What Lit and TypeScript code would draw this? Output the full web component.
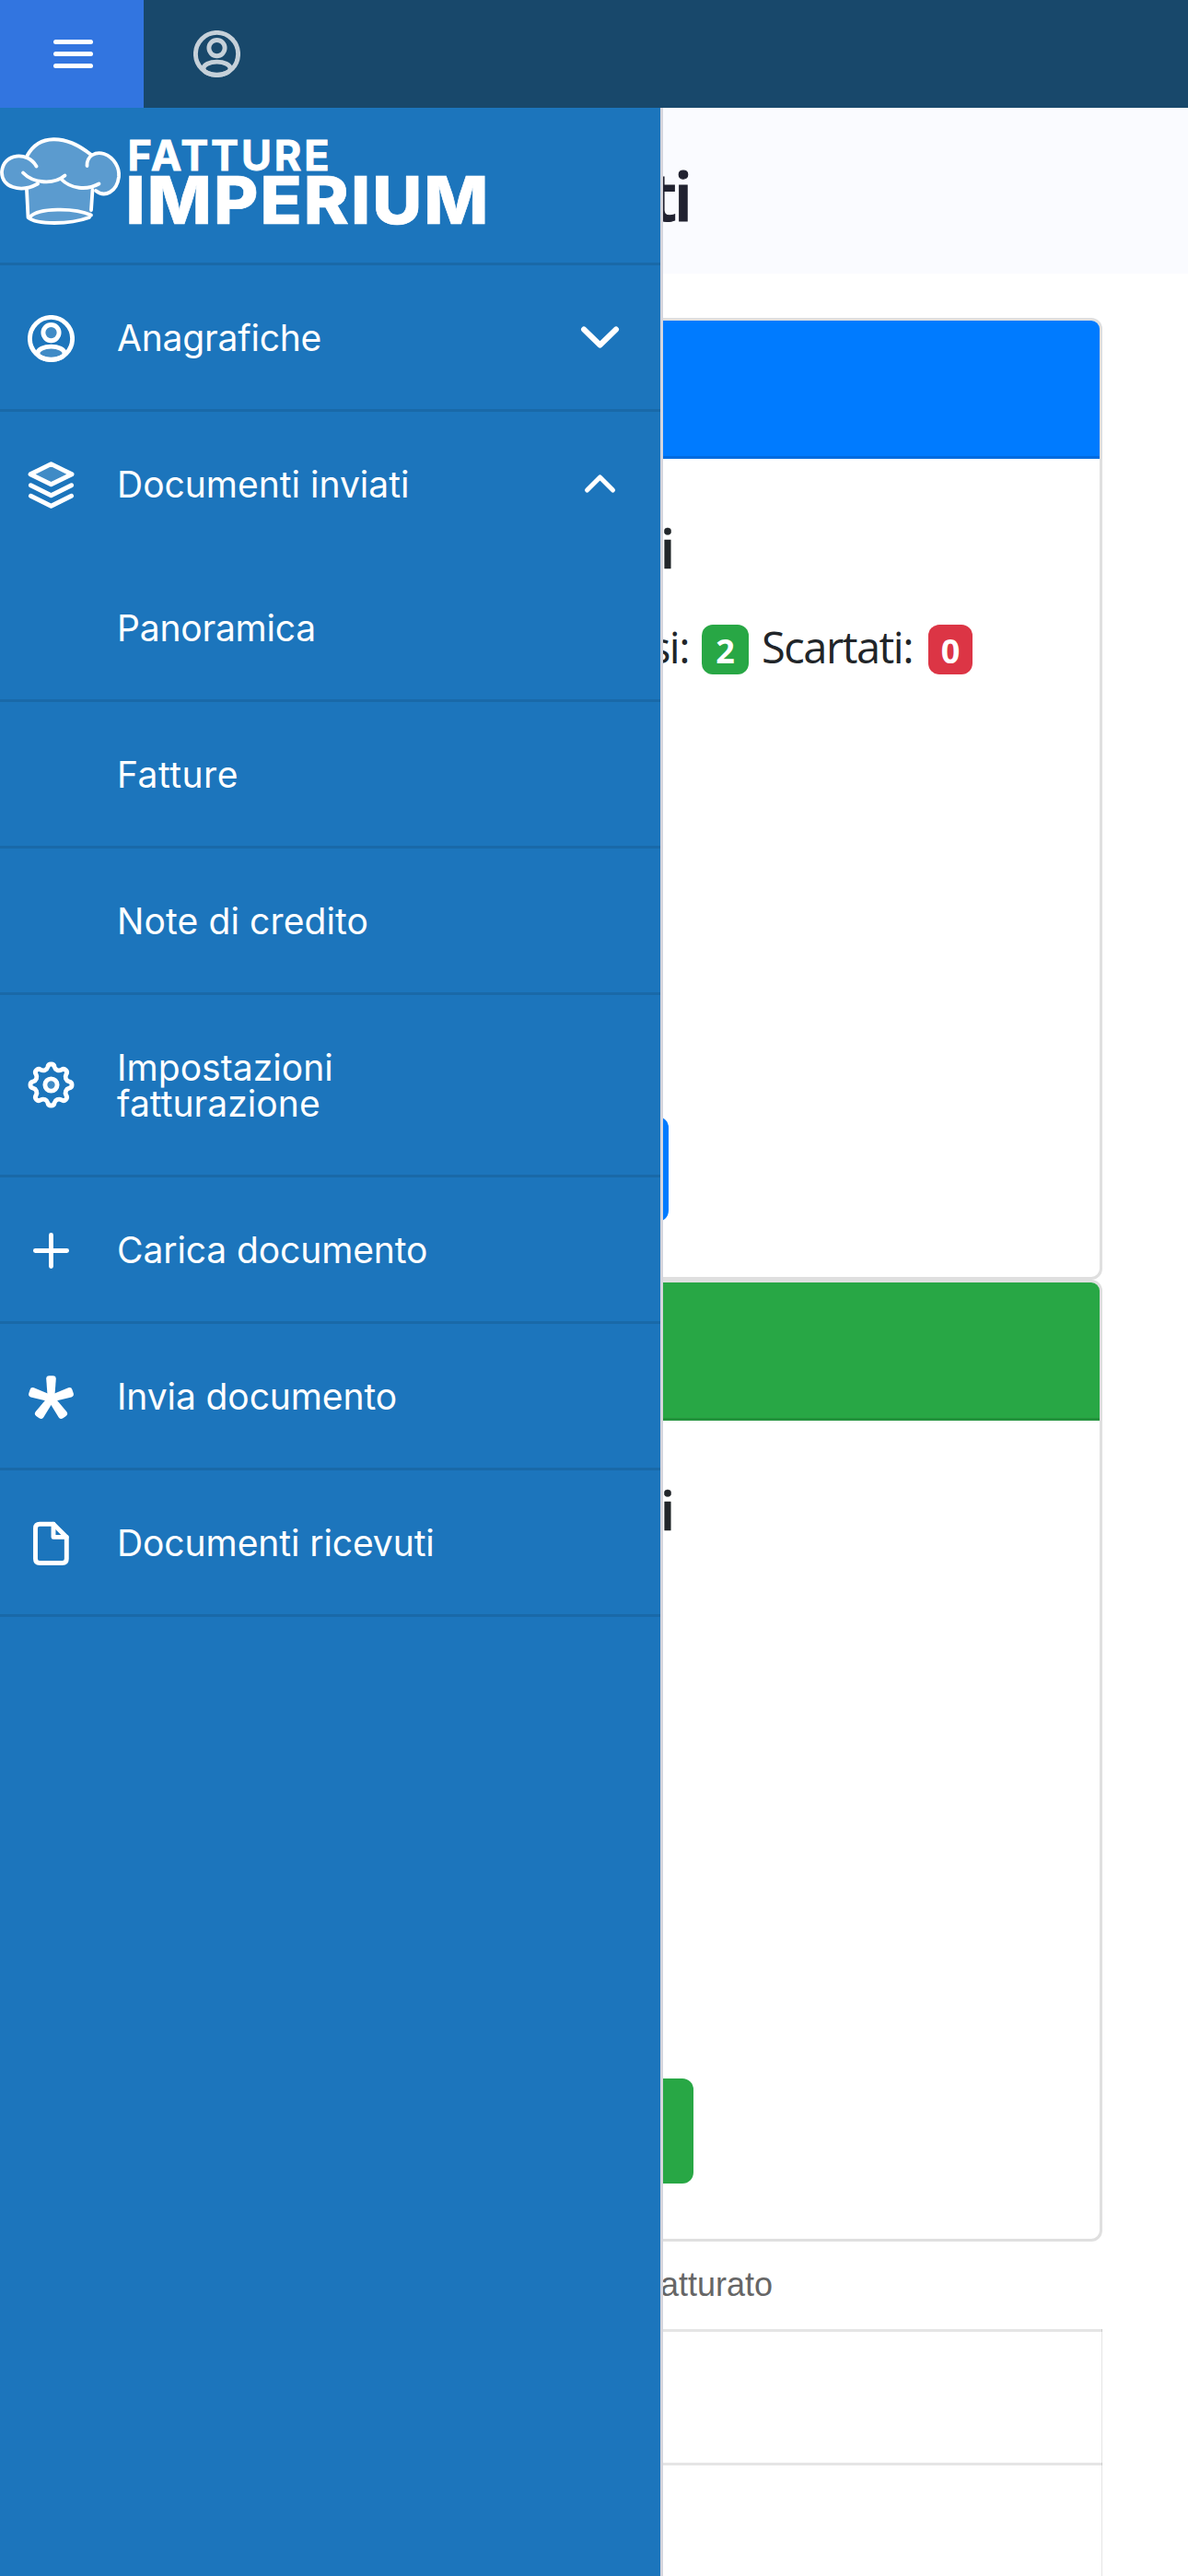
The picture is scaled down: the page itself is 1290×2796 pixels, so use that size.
import { LitElement, css, html, svg } from 'lit';
import type { TemplateResult } from 'lit';
import { customElement, property } from 'lit/decorators.js';
import { classMap } from 'lit/directives/class-map.js';
import { styleMap } from 'lit/directives/style-map.js';

interface MenuEntry {
  label: string;
  icon?: string;
  toggle?: 'open' | 'closed';
  /** Letter spacing in px. */
  tracking: number;
}

const MENU: MenuEntry[] = [
  { label: 'Anagrafiche', icon: 'user', toggle: 'closed', tracking: -0.2 },
  { label: 'Documenti inviati', icon: 'layers', toggle: 'open', tracking: 0 },
  { label: 'Panoramica', tracking: -0.2 },
  { label: 'Fatture', tracking: 0.5 },
  { label: 'Note di credito', tracking: 0.12 },
  { label: 'Impostazioni fatturazione', icon: 'gear', tracking: 0.05 },
  { label: 'Carica documento', icon: 'plus', tracking: -0.1 },
  { label: 'Invia documento', icon: 'asterisk', tracking: -0.1 },
  { label: 'Documenti ricevuti', icon: 'file', tracking: -0.08 },
];

/** Closed outline of an eight-lobed gear centred at 25.5, 25.5. */
function gearPath(): string {
  const place = (x: number, y: number, turn: number) => {
    const a = (turn * Math.PI) / 4;
    const px = 25.5 + x * Math.cos(a) - y * Math.sin(a);
    const py = 25.5 + x * Math.sin(a) + y * Math.cos(a);
    return `${px.toFixed(2)} ${py.toFixed(2)}`;
  };
  let path = `M${place(-3.6, -19.5, 0)}`;
  for (let i = 0; i < 8; i++) {
    path += `A3.65 3.65 0 0 1 ${place(3.6, -19.5, i)}`;
    path += `A5.2 5.2 0 0 0 ${place(-3.6, -19.5, i + 1)}`;
  }
  return `${path}Z`;
}

const ICONS: Record<string, TemplateResult> = {
  user: svg`
    <circle cx="25.5" cy="25.5" r="23.1" />
    <circle class="tint" cx="25.5" cy="19.1" r="8.6" />
    <ellipse class="tint" cx="25.5" cy="41.2" rx="14.6" ry="7.1" />
  `,
  layers: svg`
    <path class="tint" d="M25.5 2.6 48 13.8 25.5 24.8 3 13.8Z" />
    <path d="M3.4 25.7 25.5 36.7 47.6 25.7" />
    <path d="M3.4 37.3 25.5 48.3 47.6 37.3" />
  `,
  gear: svg`
    <path d=${gearPath()} />
    <circle class="tint" cx="25.5" cy="25.5" r="6.6" />
  `,
  plus: svg`<path d="M25.5 8.4V42.6M8.4 25.5H42.6" />`,
  asterisk: svg`
    ${[0, 72, 144, 216, 288].map(
      (angle) => svg`
        <path
          class="solid"
          transform="translate(25.5 27) rotate(${angle})"
          d="M-3.7 0-5.3-21.4Q-5.3-24.8-2-24.8H2Q5.3-24.8 5.3-21.4L3.7 0 0 4Z"
        />
      `
    )}
  `,
  file: svg`
    <path d="M28 4.2H13Q8.5 4.2 8.5 8.7V42Q8.5 46.5 13 46.5H37.8Q42.3 46.5 42.3 42V18.4Z" />
    <path d="M28 4.2V18.4H42.3" />
  `,
};

/** Outline icon on a 51px grid, drawn in the current text colour. */
@customElement('menu-icon')
export class MenuIcon extends LitElement {
  static styles = css`
    :host {
      display: block;
      width: 51px;
      height: 51px;
    }

    svg {
      display: block;
      fill: none;
      stroke: currentColor;
      stroke-width: 4.9;
      stroke-linecap: round;
      stroke-linejoin: round;
    }

    .tint {
      fill: var(--icon-tint, none);
    }

    .solid {
      fill: currentColor;
      stroke: none;
    }
  `;

  @property({ type: String })
  name = '';

  render() {
    return html`<svg width="51" height="51" viewBox="0 0 51 51">${ICONS[this.name]}</svg>`;
  }
}

/** Off-canvas navigation with the brand on top. */
@customElement('side-menu')
export class SideMenu extends LitElement {
  static styles = css`
    :host {
      display: block;
      box-sizing: border-box;
      background: #1c75bc;
      border-right: 3px solid #d5d5dd;
      color: #fff;
      font-family: Inter, sans-serif;
      font-size: 39px;
      line-height: 39px;
    }

    .brand {
      height: 171px;
      box-sizing: border-box;
      padding-top: 32px;
      box-shadow: inset 0 -3px rgba(0, 0, 0, 0.1);
    }

    .brand svg {
      display: block;
      overflow: visible;
    }

    .hat-fill {
      fill: #5b9bcf;
    }

    .hat-line {
      fill: none;
      stroke: #fff;
      stroke-width: 3.8;
      stroke-linecap: round;
      stroke-linejoin: round;
    }

    .brand text {
      fill: #fff;
      stroke: #fff;
      font-family: Inter, sans-serif;
    }

    .brand .small {
      font-size: 45px;
      font-weight: 700;
      stroke-width: 0.8;
    }

    .brand .large {
      font-size: 71px;
      font-weight: 800;
      letter-spacing: 2px;
      stroke-width: 0.6;
    }

    .item {
      display: flex;
      align-items: center;
      box-sizing: border-box;
      padding: 60px 44px 60px 30px;
      box-shadow: inset 0 -3px rgba(0, 0, 0, 0.1);
    }

    /* An expanded group shares its lower edge with the first child. */
    .item.open {
      box-shadow: none;
      margin-bottom: -3px;
    }

    .icon {
      width: 51px;
      height: 39px;
      flex: none;
      display: flex;
      align-items: center;
      --icon-tint: rgba(255, 255, 255, 0.16);
    }

    .icon.wrap {
      margin-bottom: 3px;
    }

    .label {
      width: 340px;
      margin: -1px 0 1px 46px;
      flex: none;
      white-space: nowrap;
    }

    .label.wrap {
      width: 300px;
      white-space: normal;
    }

    .chevron {
      margin-left: auto;
      fill: none;
      stroke: currentColor;
      stroke-linecap: round;
      stroke-linejoin: round;
    }
  `;

  render() {
    return html`
      <div class="brand">
        <svg width="532" height="100" viewBox="0 0 532 100">
          <path
            class="hat-fill"
            d="M30 57V89Q62 99 99 86L101 56 105 58C118 66 129 55 129 41 129 24 118 13 100 19 80 -4 45 -6 29 21 12 14 1.5 24 1.5 37 2 52 15 59 29 55Z"
          />
          <g class="hat-line">
            <path d="M29.5 20C42 -3 70 -4 99 19" />
            <path d="M39.5 31.5C30 15 4 17 2 37 1 54 22 61 41 50.5" />
            <path d="M94.5 31C94 20 104 15 113 18 124 22 130 33 129 43 127 59 114 66 104 58" />
            <path d="M25 38.5C36 50 58 52 70.5 41.5" />
            <path d="M66.5 45.5C77 56 94 58 107.5 50.5" />
            <path d="M29 57 30.5 87C40 95 75 95 97 87" />
            <path d="M33 86C42 77 80 76 99 84.5" />
            <path d="M100.5 57 99 79" />
          </g>
          <text class="small" x="138.5" y="36" textLength="219" lengthAdjust="spacing">FATTURE</text>
          <text class="large" x="136.5" y="93.5" textLength="396" lengthAdjust="spacingAndGlyphs">IMPERIUM</text>
        </svg>
      </div>
      ${MENU.map((entry) => this.renderEntry(entry))}
    `;
  }

  private renderEntry(entry: MenuEntry) {
    const wrap = entry.label.length > 20;

    return html`
      <div class=${classMap({ item: true, open: entry.toggle === 'open' })}>
        <div class=${classMap({ icon: true, wrap })}>
          ${entry.icon ? html`<menu-icon name=${entry.icon}></menu-icon>` : null}
        </div>
        <span
          class=${classMap({ label: true, wrap })}
          style=${styleMap({ letterSpacing: `${entry.tracking}px` })}
          >${entry.label}</span
        >
        ${entry.toggle ? this.renderChevron(entry.toggle) : null}
      </div>
    `;
  }

  private renderChevron(state: 'open' | 'closed') {
    return html`
      <svg class="chevron" width="43" height="27" viewBox="0 0 43 27">
        ${state === 'open'
          ? svg`<path stroke-width="5" d="M7.5 19 21.5 5 35.5 19" />`
          : svg`<path stroke-width="6" d="M4 3.5 21.5 20.5 39 3.5" />`}
      </svg>
    `;
  }
}

/** Dashboard page with the navigation drawn over it. */
@customElement('app-root')
export class AppRoot extends LitElement {
  static styles = css`
    :host {
      display: flex;
      flex-direction: column;
      position: relative;
      height: 2796px;
      overflow: hidden;
      background: #fff;
      color: #212529;
      font-family: 'Open Sans', 'Noto Sans', sans-serif;
    }

    .topbar {
      display: flex;
      align-items: center;
      height: 117px;
      flex: none;
      background: #18486b;
    }

    .burger {
      display: flex;
      flex-direction: column;
      align-items: center;
      justify-content: center;
      gap: 8px;
      width: 156px;
      height: 117px;
      padding-left: 2px;
      box-sizing: border-box;
      background: #3275e0;
    }

    .burger span {
      width: 43px;
      height: 5px;
      border-radius: 3px;
      background: #fff;
    }

    .account {
      margin-left: 54px;
      color: #c5d0d9;
    }

    .page-head {
      height: 180px;
      flex: none;
      box-sizing: border-box;
      padding-top: 40px;
      background: #fafbff;
    }

    .page-head h1 {
      width: 749px;
      margin: 0;
      color: #212230;
      font-size: 73px;
      font-weight: 600;
      line-height: 110px;
      letter-spacing: -3px;
      text-align: right;
      white-space: nowrap;
      -webkit-text-stroke: 1.2px #212230;
    }

    .content {
      padding: 48px 93px 0;
    }

    .card {
      display: flex;
      flex-direction: column;
      height: 1044px;
      box-sizing: border-box;
      border: 3px solid #dfdfdf;
      border-radius: 12px;
      overflow: hidden;
    }

    .card-head {
      height: 150px;
      flex: none;
      box-sizing: border-box;
      border-bottom: 3px solid rgba(0, 0, 0, 0.125);
    }

    .blue {
      background: #007bff;
    }

    .green {
      background: #28a745;
    }

    .card-body {
      display: flex;
      flex-direction: column;
      flex: 1;
      padding: 57px 0 60px;
    }

    .card-body h5 {
      width: 637px;
      margin: 0;
      font-size: 57px;
      font-weight: 600;
      line-height: 80px;
      text-align: right;
      white-space: nowrap;
      -webkit-text-stroke: 0.4px #212529;
    }

    .stats {
      display: flex;
      align-items: center;
      justify-content: flex-end;
      width: 960px;
      height: 54px;
      margin-top: 43px;
      font-size: 47px;
      letter-spacing: -1.5px;
      white-space: nowrap;
    }

    .stat {
      margin-bottom: 6px;
    }

    .badge {
      width: 51px;
      height: 54px;
      margin: 0 14px;
      border-radius: 12px;
      color: #fff;
      font-size: 36px;
      font-weight: 700;
      line-height: 57px;
      letter-spacing: 0;
      text-align: center;
    }

    .badge.red {
      width: 48px;
      margin: 0 0 0 17px;
      background: #dc3545;
    }

    .button {
      width: 600px;
      height: 114px;
      margin-top: auto;
      border-radius: 12px;
    }

    .button.blue {
      margin-left: 30px;
    }

    .button.green {
      margin-left: 57px;
    }

    .legend {
      width: 746px;
      padding: 36px 0 38px;
      color: #666;
      font-family: 'Liberation Sans', Arial, sans-serif;
      font-size: 36px;
      line-height: 21px;
      text-align: right;
    }

    .grid {
      border-right: 1px solid rgba(0, 0, 0, 0.1);
    }

    .grid div {
      height: 145px;
      margin-right: -1px;
      box-sizing: border-box;
      border-top: 3px solid rgba(0, 0, 0, 0.1);
    }

    side-menu {
      position: absolute;
      top: 117px;
      bottom: 0;
      left: 0;
      width: 720px;
    }
  `;

  render() {
    return html`
      <header class="topbar">
        <div class="burger"><span></span><span></span><span></span></div>
        <menu-icon class="account" name="user"></menu-icon>
      </header>
      <div class="page-head"><h1>Documenti inviati</h1></div>
      <main class="content">
        <section class="card">
          <div class="card-head blue"></div>
          <div class="card-body">
            <h5>Documenti inviati</h5>
            <div class="stats">
              <span class="stat">Emessi:</span>
              <span class="badge green">2</span>
              <span class="stat">Scartati:</span>
              <span class="badge red">0</span>
            </div>
            <div class="button blue"></div>
          </div>
        </section>
        <section class="card">
          <div class="card-head green"></div>
          <div class="card-body">
            <h5>Documenti ricevuti</h5>
            <div class="button green"></div>
          </div>
        </section>
        <div class="legend">Fatturato</div>
        <div class="grid">
          <div></div>
          <div></div>
        </div>
      </main>
      <side-menu></side-menu>
    `;
  }
}

declare global {
  interface HTMLElementTagNameMap {
    'app-root': AppRoot;
    'side-menu': SideMenu;
    'menu-icon': MenuIcon;
  }
}
